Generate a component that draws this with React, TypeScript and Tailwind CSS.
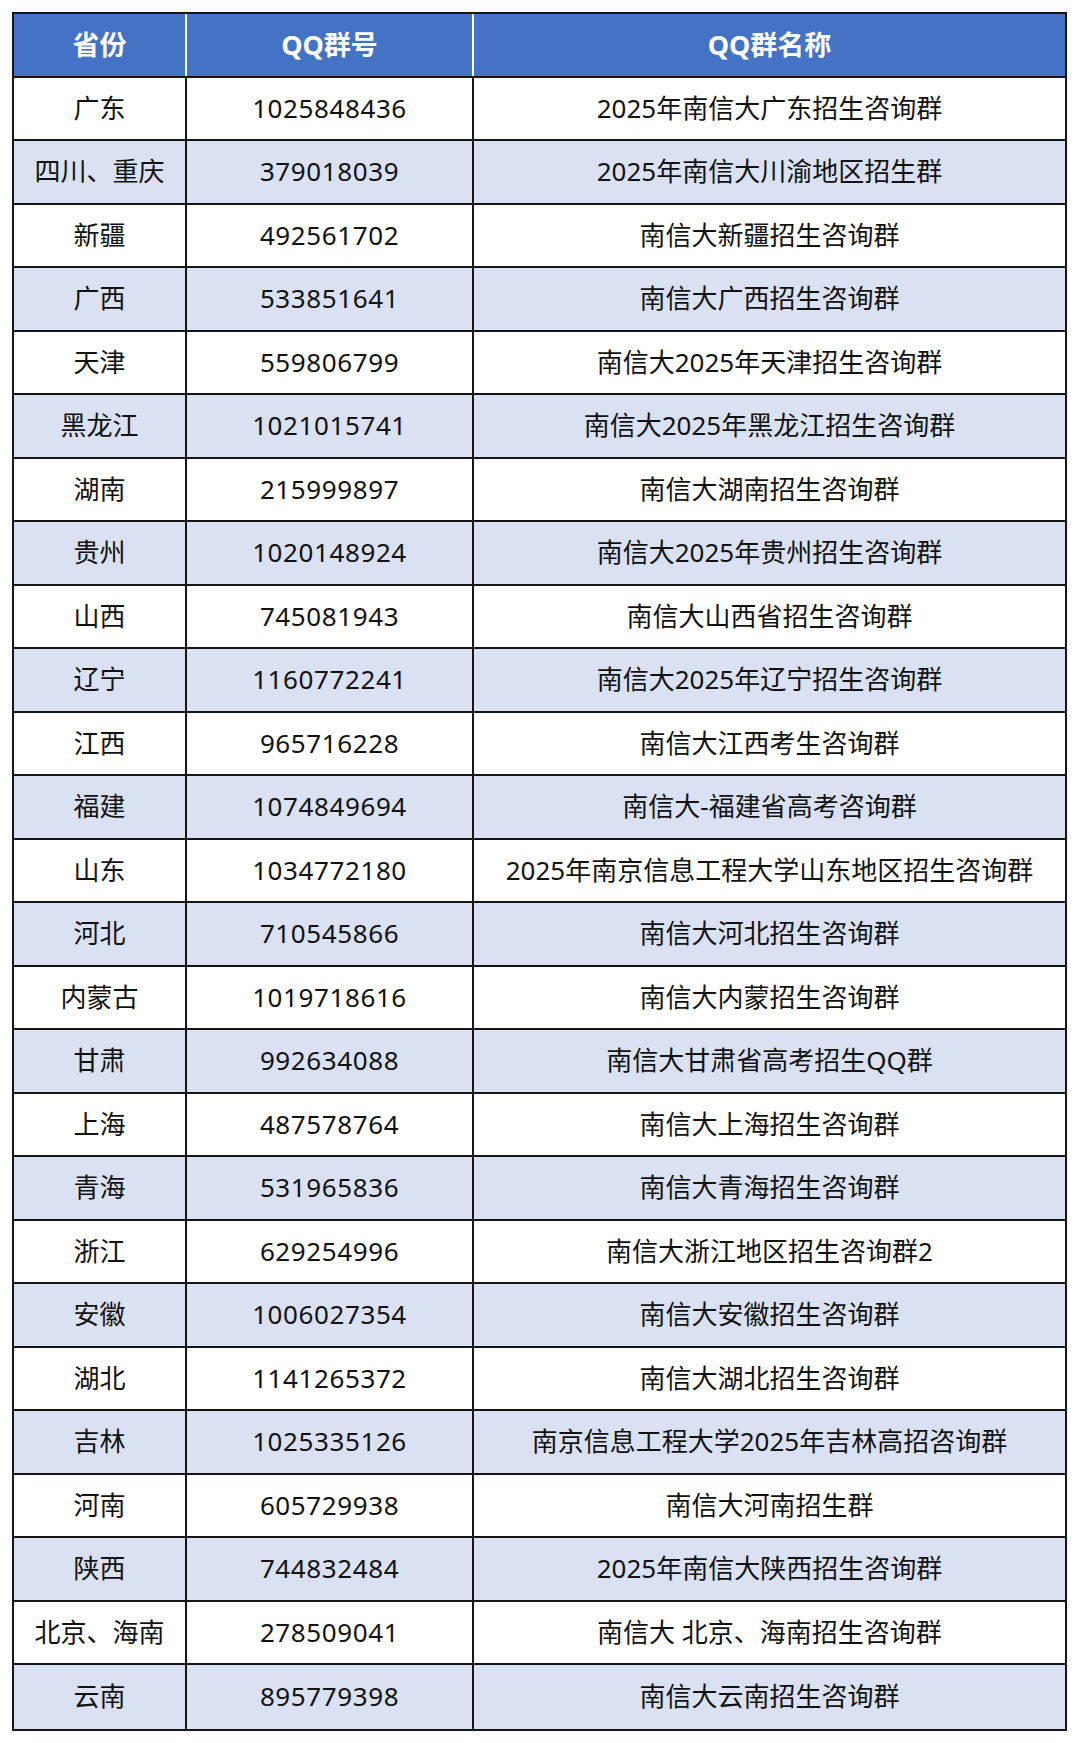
const rows: [string, string, string][] = [
  ["广东", "1025848436", "2025年南信大广东招生咨询群"],
  ["四川、重庆", "379018039", "2025年南信大川渝地区招生群"],
  ["新疆", "492561702", "南信大新疆招生咨询群"],
  ["广西", "533851641", "南信大广西招生咨询群"],
  ["天津", "559806799", "南信大2025年天津招生咨询群"],
  ["黑龙江", "1021015741", "南信大2025年黑龙江招生咨询群"],
  ["湖南", "215999897", "南信大湖南招生咨询群"],
  ["贵州", "1020148924", "南信大2025年贵州招生咨询群"],
  ["山西", "745081943", "南信大山西省招生咨询群"],
  ["辽宁", "1160772241", "南信大2025年辽宁招生咨询群"],
  ["江西", "965716228", "南信大江西考生咨询群"],
  ["福建", "1074849694", "南信大-福建省高考咨询群"],
  ["山东", "1034772180", "2025年南京信息工程大学山东地区招生咨询群"],
  ["河北", "710545866", "南信大河北招生咨询群"],
  ["内蒙古", "1019718616", "南信大内蒙招生咨询群"],
  ["甘肃", "992634088", "南信大甘肃省高考招生QQ群"],
  ["上海", "487578764", "南信大上海招生咨询群"],
  ["青海", "531965836", "南信大青海招生咨询群"],
  ["浙江", "629254996", "南信大浙江地区招生咨询群2"],
  ["安徽", "1006027354", "南信大安徽招生咨询群"],
  ["湖北", "1141265372", "南信大湖北招生咨询群"],
  ["吉林", "1025335126", "南京信息工程大学2025年吉林高招咨询群"],
  ["河南", "605729938", "南信大河南招生群"],
  ["陕西", "744832484", "2025年南信大陕西招生咨询群"],
  ["北京、海南", "278509041", "南信大 北京、海南招生咨询群"],
  ["云南", "895779398", "南信大云南招生咨询群"],
];

export default function App() {
  return (
    <div
      className="h-[1743px] w-[1080px] bg-white pl-[12px] pt-[12px]"
      style={{ fontFamily: '"Noto Sans", "Noto Sans CJK SC", sans-serif' }}
    >
      <div className="w-[1055px] border-2 border-[#151515]">
        {/* Header */}
        <div className="grid h-[63.5px] grid-cols-[173px_287px_1fr] border-b-2 border-[#151515] bg-[#4472c4] text-[27px] font-bold text-white">
          <div className="flex items-center justify-center border-r-2 border-white">
            省份
          </div>
          <div className="flex items-center justify-center border-r-2 border-white">
            QQ群号
          </div>
          <div className="flex items-center justify-center">QQ群名称</div>
        </div>

        {rows.map(([prov, num, name], i) => (
          <div
            key={num}
            className={`grid h-[63.5px] grid-cols-[173px_287px_1fr] text-[26px] text-[#111] ${
              i < rows.length - 1 ? "border-b-2 border-[#151515]" : ""
            } ${i % 2 === 1 ? "bg-[#d9e1f2]" : "bg-white"}`}
          >
            <div className="flex items-center justify-center border-r-2 border-[#151515] whitespace-pre">
              {prov}
            </div>
            <div className="flex items-center justify-center border-r-2 border-[#151515] tracking-[0.6px]">
              {num}
            </div>
            <div className="flex items-center justify-center whitespace-pre">
              {name}
            </div>
          </div>
        ))}
      </div>
    </div>
  );
}
